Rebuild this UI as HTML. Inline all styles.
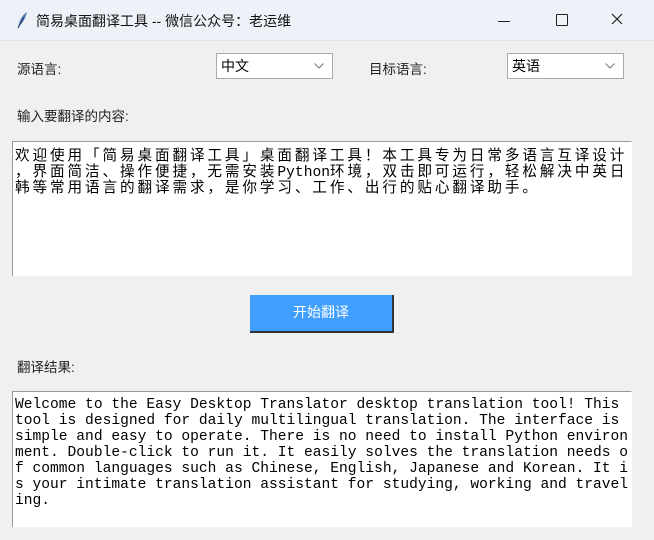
<!DOCTYPE html>
<html><head><meta charset="utf-8"><style>
body{margin:0;width:654px;height:540px;background:#f0f0f0;overflow:hidden;font-family:"Liberation Sans","Noto Sans CJK SC",sans-serif;position:relative}
.abs{position:absolute}
.title{left:0;top:0;width:654px;height:40px;background:#eef2f8;font-size:14px;color:#111}
.lbl{font-size:13.5px;color:#222}
.combo{background:#fff;border:1px solid #aaa;height:26px;box-sizing:border-box;font-size:14px;line-height:24px;padding-left:4px;color:#000}
.combo svg{position:absolute;right:8px;top:9px}
.ta{background:#fff;border:1px solid #999;border-right-color:#fff;border-bottom:none;box-sizing:border-box;font-family:"Liberation Mono","Noto Sans CJK SC",monospace;font-size:14.6px;line-height:16px;padding:2px 0 0 2px;white-space:pre;color:#000}
.cj{letter-spacing:2.9px}
.cj span{letter-spacing:0}
</style></head><body>
<div class="abs title">
 <svg class="abs" style="left:16px;top:11px" width="12" height="18" viewBox="0 0 12 18"><path d="M2 17 C3 10 6 4 11 1 C10 6 7 12 3 15 Z" fill="#5a7fb5"/><path d="M2 17 L8 6" stroke="#1f3b66" stroke-width="1"/></svg>
 <div class="abs" style="left:36px;top:11px">简易桌面翻译工具 -- 微信公众号：老运维</div>
 <div class="abs" style="left:498px;top:21px;width:12px;height:1px;background:#222"></div>
 <div class="abs" style="left:556px;top:14px;width:10px;height:10px;border:1px solid #222;border-radius:1px"></div>
 <svg class="abs" style="left:611px;top:13px" width="12" height="12"><path d="M1 1L11 11M11 1L1 11" stroke="#222" stroke-width="1.2"/></svg>
</div>
<div class="abs" style="left:0;top:40px;width:654px;height:1px;background:#e4e4e4"></div>
<div class="abs lbl" style="left:17px;top:58px">源语言:</div>
<div class="abs combo" style="left:216px;top:53px;width:117px">中文<svg width="10" height="6"><path d="M0.5 0.5L5 5L9.5 0.5" stroke="#777" fill="none"/></svg></div>
<div class="abs lbl" style="left:369px;top:58px">目标语言:</div>
<div class="abs combo" style="left:507px;top:53px;width:117px">英语<svg width="10" height="6"><path d="M0.5 0.5L5 5L9.5 0.5" stroke="#777" fill="none"/></svg></div>
<div class="abs lbl" style="left:17px;top:105px">输入要翻译的内容:</div>
<div class="abs ta" style="left:12px;top:141px;width:620px;height:135px;padding-top:7px"><div class="cj">欢迎使用「简易桌面翻译工具」桌面翻译工具！本工具专为日常多语言互译设计</div><div class="cj">，界面简洁、操作便捷，无需安装<span>Python</span>环境，双击即可运行，轻松解决中英日</div><div class="cj">韩等常用语言的翻译需求，是你学习、工作、出行的贴心翻译助手。</div></div>
<div class="abs" style="left:250px;top:295px;width:144px;height:38px;box-sizing:border-box;background:#409eff;border-right:2px solid #333;border-bottom:2px solid #333;color:#fff;font-size:14px;text-align:center;line-height:35px">开始翻译</div>
<div class="abs lbl" style="left:17px;top:356px">翻译结果:</div>
<div class="abs ta" style="left:12px;top:391px;width:620px;height:136px;padding-top:5px">Welcome to the Easy Desktop Translator desktop translation tool! This
tool is designed for daily multilingual translation. The interface is
simple and easy to operate. There is no need to install Python environ
ment. Double-click to run it. It easily solves the translation needs o
f common languages such as Chinese, English, Japanese and Korean. It i
s your intimate translation assistant for studying, working and travel
ing.</div>
</body></html>
